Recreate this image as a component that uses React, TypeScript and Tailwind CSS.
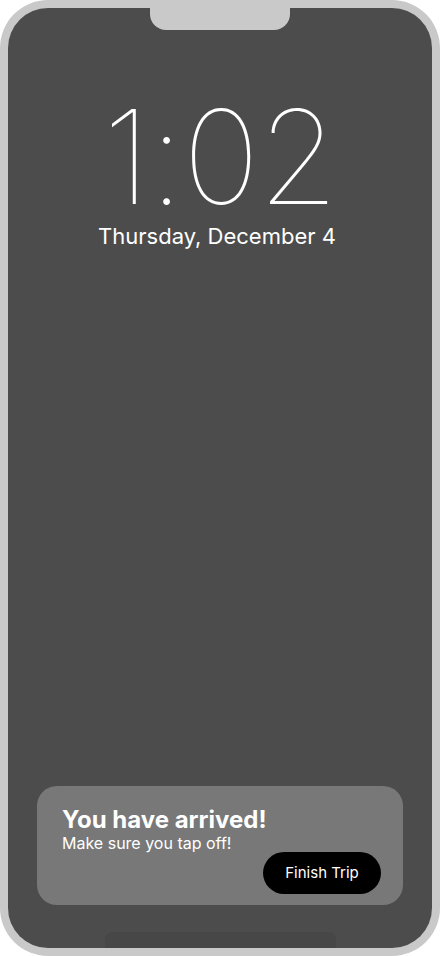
export default function App() {
  return (
    <div className="w-[440px] h-[956px] bg-white" style={{ fontFamily: 'Inter, "Noto Sans", sans-serif' }}>
      <div className="relative w-full h-full rounded-[48px] bg-[#c9c9c9] p-2">
        <div className="relative w-full h-full rounded-[40px] bg-[#4c4c4c] overflow-hidden flex flex-col items-center">
          {/* notch */}
          <div className="absolute top-[-8px] left-[142px] w-[140px] h-[30px] rounded-b-[16px] bg-[#c9c9c9]" />

          <div className="mt-[99px] text-white font-thin text-[130px] leading-[100px] tracking-[-1.5px]">1:02</div>
          <div className="mt-[18px] mr-[6px] text-white text-[22px] leading-none">Thursday, December 4</div>

          <div className="flex-1" />

          {/* notification */}
          <div className="w-[366px] rounded-[20px] bg-[#787878] pl-[25px] pr-[22px] pt-[20px] pb-[11px] flex flex-col">
            <div className="text-white font-bold text-[24px] leading-[28px]">You have arrived!</div>
            <div className="text-white text-[16px] leading-[18px]">Make sure you tap off!</div>
            <div className="flex justify-end">
              <button className="h-[42px] w-[118px] rounded-full bg-black text-white text-[15px]">Finish Trip</button>
            </div>
          </div>

          <div className="mt-[27px] w-[231px] h-[16px] rounded-t-[8px] bg-[#474747]" />
        </div>
      </div>
    </div>
  );
}
